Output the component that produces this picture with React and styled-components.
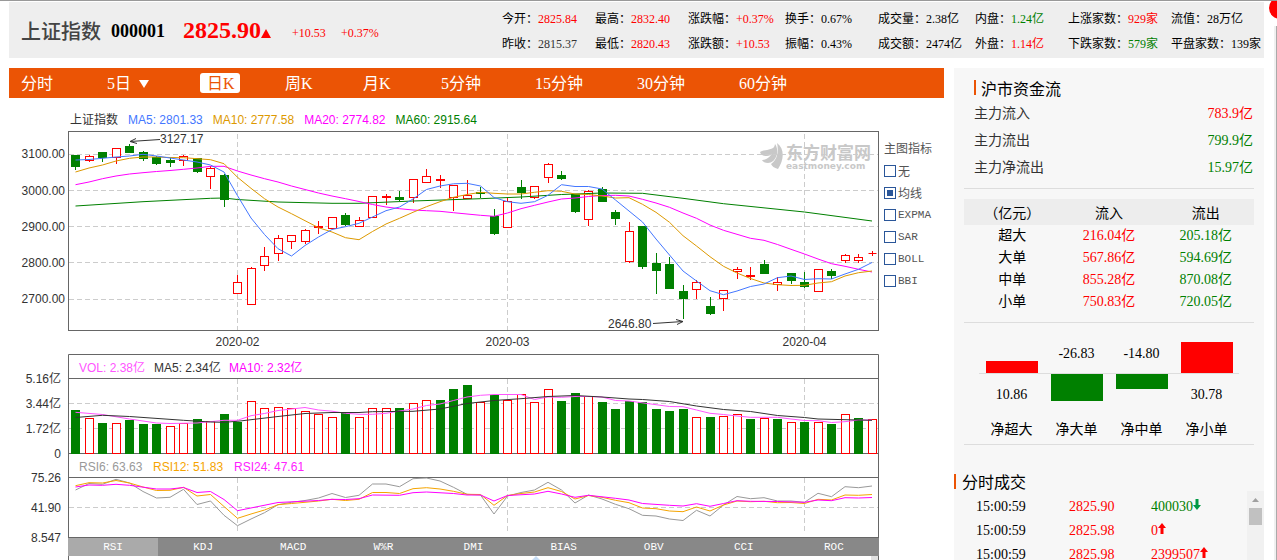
import React, { useState } from "react";
import styled, { createGlobalStyle } from "styled-components";

const RED = "#ff0000";
const GREEN = "#008000";

// [body top, body bottom, high, low, rising]
const candles = [
  [156, 167, 156, 170, 0], [157, 161, 155, 162, 1], [153, 158, 152, 162, 0],
  [149, 158, 148, 164, 1], [147, 153, 144, 153, 0], [153, 159, 151, 161, 0],
  [158, 164, 156, 165, 0], [161, 163, 158, 167, 0], [157, 161, 155, 166, 1],
  [159, 172, 159, 173, 0], [169, 177, 166, 189, 1], [176, 200, 174, 207, 0],
  [283, 294, 275, 294, 1], [269, 305, 267, 305, 1], [257, 266, 247, 271, 1],
  [239, 254, 235, 261, 1], [236, 242, 236, 249, 1], [231, 242, 229, 244, 1],
  [227, 228, 221, 234, 1], [218, 229, 218, 229, 1], [216, 225, 213, 226, 0],
  [221, 227, 217, 227, 1], [197, 218, 197, 218, 1], [197, 198, 194, 205, 1],
  [198, 200, 191, 201, 0], [180, 198, 180, 203, 1], [177, 183, 169, 183, 1],
  [180, 181, 175, 188, 1], [186, 198, 186, 211, 1], [196, 199, 180, 199, 1],
  [193, 194, 187, 198, 0], [217, 234, 209, 235, 0], [202, 228, 197, 228, 1],
  [188, 193, 180, 199, 0], [187, 198, 187, 199, 1], [165, 178, 163, 183, 1],
  [176, 179, 171, 180, 0], [195, 212, 195, 213, 0], [192, 220, 190, 226, 1],
  [190, 202, 187, 202, 0], [213, 219, 210, 225, 0], [232, 262, 222, 263, 1],
  [227, 267, 227, 269, 0], [264, 271, 253, 294, 0], [265, 289, 257, 289, 0],
  [292, 299, 285, 319, 0], [283, 290, 280, 299, 1], [307, 314, 297, 315, 0],
  [291, 299, 291, 311, 1], [270, 272, 267, 279, 1], [276, 277, 267, 280, 1],
  [265, 274, 260, 274, 0], [283, 285, 277, 291, 1], [274, 281, 273, 284, 0],
  [283, 287, 272, 288, 0], [270, 292, 270, 292, 1], [272, 276, 269, 279, 0],
  [256, 261, 254, 263, 1], [258, 261, 254, 263, 1], [253, 253, 251, 256, 1],
];

const ma5 = [
  160, 159.5, 158.3, 157, 156, 154.3, 156, 158, 160, 162, 165, 172, 195.7, 218,
  234.5, 248.7, 256, 245.5, 237, 229.5, 226.7, 223.3, 217, 210.7, 207, 199,
  189.5, 186, 183.8, 183.3, 186, 197.5, 201.7, 203.3, 201.7, 195.3, 184.7,
  186.5, 186.5, 189, 200, 211, 222, 239, 255, 271, 281, 290.7, 294.7, 291,
  286.5, 284, 277.7, 276, 279.5, 278.7, 279, 274, 269.3, 262.5,
];
const ma10 = [
  172, 168, 165, 161, 158.3, 157, 157, 157.5, 157.7, 158.7, 159.7, 163.7,
  177.3, 188.3, 198.7, 207, 213.7, 220.7, 227.7, 232, 237.7, 239.7, 231.5, 224,
  218.3, 212.3, 206.7, 201.7, 197.3, 194.5, 192.3, 193.3, 194, 194, 192.3,
  190.7, 191.3, 194, 194.5, 196, 198, 197.7, 204.3, 212.3, 222.3, 235.7, 246,
  256.7, 266.3, 273, 278.5, 283, 284.7, 285.5, 285.3, 283, 281.7, 276, 272.7,
  271,
];
const ma20 = [
  184.7, 182, 178.7, 176, 174, 172.7, 171.5, 170.5, 169.3, 168, 166.3, 166.3,
  171, 175, 178.7, 182, 186, 189.5, 193, 196, 198.7, 201.5, 204.5, 207, 208.7,
  210, 210.7, 211.3, 212.7, 214, 215.3, 216.3, 213, 208.7, 205.3, 202, 199,
  198, 196.5, 195.5, 195.3, 196, 199.3, 203, 207.3, 213, 218.3, 225, 230.3,
  234.3, 238.3, 240.3, 244.5, 249.3, 254, 259, 263.7, 266.3, 269.3, 272,
];
// sparse series are [index, y] pairs
const ma60 = [
  [0, 206], [5, 201.7], [10, 198.3], [11, 198], [12, 199.5], [15, 202],
  [19, 203.3], [21, 203.3], [25, 201], [30, 198.7], [33, 197], [36, 194.5],
  [39, 193], [42, 193.3], [45, 198.3], [48, 203.7], [54, 212], [59, 221],
];

// [bar top, rising]
const volumes = [
  [410, 0], [418, 1], [423, 0], [423, 1], [420, 0], [424, 0], [424, 0],
  [426, 1], [423, 1], [419, 0], [421, 1], [414, 0], [422, 0], [401, 1],
  [408, 1], [407, 1], [408, 1], [411, 1], [414, 1], [417, 1], [413, 0],
  [417, 1], [408, 1], [408, 1], [408, 0], [403, 1], [400, 1], [400, 0],
  [389, 0], [385, 0], [402, 1], [395, 0], [400, 1], [394, 1], [402, 1],
  [389, 1], [401, 0], [393, 0], [396, 1], [402, 0], [409, 0], [401, 0],
  [402, 0], [409, 0], [411, 0], [409, 0], [417, 1], [417, 0], [416, 1],
  [414, 1], [419, 0], [418, 1], [419, 0], [422, 1], [422, 0], [422, 1],
  [424, 0], [414, 1], [418, 0], [419, 1],
];
const volMa5 = [
  [0, 412.3], [2, 414.5], [4, 419], [6, 423], [7, 423.5], [9, 423],
  [11, 420.3], [12, 420.3], [13, 415.7], [14, 413.5], [15, 410.5],
  [17, 407.5], [18, 410], [19, 411.2], [20, 413.3], [21, 414.3], [22, 414.3],
  [23, 413.3], [24, 411], [25, 409], [26, 405.5], [27, 404], [28, 400.5],
  [29, 397], [30, 395.3], [31, 394.5], [33, 394.5], [34, 399.5], [35, 397],
  [36, 397.3], [37, 396.5], [38, 396.5], [39, 397], [40, 400.5], [41, 401],
  [43, 404.7], [44, 406.5], [45, 406.7], [46, 410], [47, 413.3], [48, 414.5],
  [49, 416], [50, 417.3], [52, 417.3], [53, 419], [54, 420.5], [55, 420.7],
  [56, 422.5], [57, 421.7], [58, 420], [59, 420],
];
const volMa10 = [
  [0, 417.5], [2, 415.3], [4, 416.5], [8, 420.3], [10, 422], [11, 422.3],
  [12, 421.3], [15, 416.5], [17, 413.5], [19, 412.5], [21, 412.5],
  [22, 411.7], [25, 411.3], [27, 409], [29, 403.5], [31, 400.5], [33, 398.7],
  [35, 396.5], [37, 395.5], [39, 397], [41, 399], [42, 399.5], [44, 401.5],
  [46, 406], [48, 409.5], [50, 411.5], [52, 415.5], [54, 417.5], [55, 419],
  [57, 419.7], [59, 420.3],
];

const rsi6 = [
  490, 483.5, 484.3, 479.3, 483, 491.5, 498, 497.3, 489.3, 504.5, 501, 515.3,
  525.7, 519, 512.7, 504.7, 502.3, 500.5, 498, 493.5, 497.5, 495.3, 484, 484,
  486.7, 478.7, 478, 481, 487.3, 494.3, 495, 514, 496, 492.5, 490, 482.3, 490,
  503, 495, 499, 504.3, 508.7, 515.3, 516, 519, 520.5, 510.3, 516, 505, 496.5,
  498.7, 497.7, 501, 501, 502.3, 493.3, 496.7, 486.7, 487.7, 486,
];
const rsi12 = [
  485.7, 482.7, 483, 480.5, 483, 487, 490.5, 490.3, 487.3, 496, 494.5, 506.5,
  518.3, 514, 510, 504.7, 503.5, 502.3, 501, 499.3, 500.5, 499.3, 492.5, 492.5,
  493.5, 488.7, 487.7, 489, 491.3, 494.3, 494.5, 505.3, 495.5, 493.5, 492,
  487.7, 491.5, 499, 495.5, 497.3, 500.3, 502.7, 508, 508.7, 511, 511.7, 507,
  511, 505, 501, 501.7, 501.3, 502.7, 502.5, 503.5, 499.3, 500, 495, 495.3,
  494.5,
];
const rsi24 = [
  [0, 487], [1, 485], [2, 485.3], [3, 484.3], [4, 485.3], [6, 489], [7, 489],
  [8, 487.5], [9, 492.5], [10, 491.5], [11, 499.5], [12, 510.7], [15, 502.5],
  [18, 500.5], [19, 499.3], [20, 499.5], [21, 498.7], [22, 495], [24, 495.3],
  [25, 492.7], [26, 492], [28, 493.5], [29, 495], [30, 495], [31, 501],
  [32, 495.5], [34, 494], [35, 491.3], [36, 494], [37, 497.3], [38, 495.3],
  [40, 498.3], [41, 500], [42, 503.5], [44, 505.3], [45, 506], [46, 503.7],
  [47, 506.3], [48, 503.5], [49, 500.7], [50, 501.3], [52, 501.5],
  [54, 502.3], [55, 500], [56, 500.7], [57, 497.7], [58, 498], [59, 497.5],
];

const stats = [
  ["今开", "2825.84", RED], ["最高", "2832.40", RED], ["涨跌幅", "+0.37%", RED],
  ["换手", "0.67%"], ["成交量", "2.38亿"], ["内盘", "1.24亿", GREEN],
  ["上涨家数", "929家", RED], ["流值", "28万亿"],
  ["昨收", "2815.37", "#333"], ["最低", "2820.43", RED], ["涨跌额", "+10.53", RED],
  ["振幅", "0.43%"], ["成交额", "2474亿"], ["外盘", "1.14亿", RED],
  ["下跌家数", "579家", GREEN], ["平盘家数", "139家"],
];

const periods = [
  ["分时", 48], ["5日", 62], ["日K", 40], ["周K", 40], ["月K", 40],
  ["5分钟", 56], ["15分钟", 64], ["30分钟", 64], ["60分钟", 64],
];

const overlays = ["无", "均线", "EXPMA", "SAR", "BOLL", "BBI"];
const indicators = ["RSI", "KDJ", "MACD", "W%R", "DMI", "BIAS", "OBV", "CCI", "ROC"];

const flows = [
  ["主力流入", "783.9亿", RED],
  ["主力流出", "799.9亿", GREEN],
  ["主力净流出", "15.97亿", GREEN],
];
const orders = [
  ["超大", "216.04亿", "205.18亿"],
  ["大单", "567.86亿", "594.69亿"],
  ["中单", "855.28亿", "870.08亿"],
  ["小单", "750.83亿", "720.05亿"],
];
const nets = [
  ["净超大", 10.86, 12],
  ["净大单", -26.83, 27],
  ["净中单", -14.8, 15],
  ["净小单", 30.78, 31],
];
const trades = [
  ["15:00:59", "2825.90", "400030", false],
  ["15:00:59", "2825.98", "0", true],
  ["15:00:59", "2825.98", "2399507", true],
];

const barX = (i) => 66.5 + i * 13.5;

const toPoints = (series) =>
  series
    .map((p, i) => (Array.isArray(p) ? `${barX(p[0])},${p[1]}` : `${barX(i)},${p}`))
    .join(" ");

const monthLines = [12, 32, 54];

const Candle = ({ index, data }) => {
  const [top, bottom, high, low, up] = data;
  const x = Math.floor(barX(index)) + 0.5;
  const color = up ? RED : GREEN;
  if (top === bottom) {
    return (
      <path d={`M${x - 4} ${top + 0.5}H${x + 4}M${x} ${high}V${low}`} stroke={color} />
    );
  }
  const thin = bottom - top <= 1;
  return (
    <g stroke={color} fill={up ? "#fff" : GREEN}>
      <line x1={x} x2={x} y1={high} y2={low} />
      <rect
        x={x - 4}
        y={top - 0.5}
        width="8"
        height={bottom - top}
        fill={thin ? color : undefined}
      />
    </g>
  );
};

const PriceChart = () => (
  <Chart viewBox="0 128 870 224" role="img" aria-label="上证指数 日K">
    <g fill="#c8c8c8">
      <path d="M751 152C756 149 762 151 766 146C767 150 763 156 758 156C754 156 752 155 751 152Z" />
      <path d="M753 160C759 160 764 155 766 144C771 151 767 163 759 163C756 163 754 162 753 160Z" />
      <path d="M768 143C776 149 775 160 769 169C765 168 763 166 762 164C768 160 770 152 768 143Z" />
      <text x="777" y="159" fontSize="17" fontWeight="700">东方财富网</text>
      <BrandText x="777" y="169">eastmoney.com</BrandText>
    </g>
    <Grid>
      {[154.5, 190.5, 226.5, 262.5, 299.5].map((y) => (
        <line key={y} x1="60" x2="869" y1={y} y2={y} />
      ))}
      {monthLines.map((i) => (
        <line key={i} x1={barX(i)} x2={barX(i)} y1="134" y2="330" />
      ))}
    </Grid>
    <Frame>
      <rect x="59.5" y="131.5" width="810" height="199" />
    </Frame>
    {candles.map((c, i) => (
      <Candle key={i} index={i} data={c} />
    ))}
    <Series>
      <polyline points={toPoints(ma60)} stroke="#008000" />
      <polyline points={toPoints(ma20)} stroke="#ff00ff" />
      <polyline points={toPoints(ma10)} stroke="#dd9900" />
      <polyline points={toPoints(ma5)} stroke="#4477ff" />
    </Series>
    <g stroke="#333" fill="none">
      <path d="M151 139.500L121 141.500M127 138.500L121 141.500L128 143.500" />
      <path d="M644 323.500L674 321.500M667 319.500L674 321.500L668 324.500" />
    </g>
    <text x="151" y="143">3127.17</text>
    <text x="599" y="328">2646.80</text>
    <g textAnchor="end">
      <text x="56" y="158">3100.00</text>
      <text x="56" y="195">3000.00</text>
      <text x="56" y="231">2900.00</text>
      <text x="56" y="267">2800.00</text>
      <text x="56" y="303">2700.00</text>
    </g>
    <g textAnchor="middle">
      {["2020-02", "2020-03", "2020-04"].map((m, i) => (
        <text key={m} x={barX(monthLines[i])} y="346">{m}</text>
      ))}
    </g>
  </Chart>
);

const VolumeChart = () => (
  <Chart viewBox="0 352 870 186" role="img" aria-label="成交量 RSI">
    <Grid>
      {[403.5, 428.5, 507.5].map((y) => (
        <line key={y} x1="60" x2="869" y1={y} y2={y} />
      ))}
      {monthLines.map((i) => (
        <g key={i}>
          <line x1={barX(i)} x2={barX(i)} y1="379" y2="453" />
          <line x1={barX(i)} x2={barX(i)} y1="478" y2="534" />
        </g>
      ))}
    </Grid>
    <Frame>
      <path d="M59.500 538V354.500H869.500V538M59 378.500H870M59 453.500H870M59 477.500H870M59 537.500H870" />
    </Frame>
    {volumes.map(([top, up], i) => (
      <rect
        key={i}
        x={Math.floor(barX(i)) - 3.5}
        y={top + 0.5}
        width="8"
        height={453 - top}
        fill={up ? "#fff" : GREEN}
        stroke={up ? RED : GREEN}
      />
    ))}
    <Series>
      <polyline points={toPoints(volMa5)} stroke="#ff55ff" />
      <polyline points={toPoints(volMa10)} stroke="#333333" />
      <polyline points={toPoints(rsi6)} stroke="#999999" />
      <polyline points={toPoints(rsi12)} stroke="#f5a400" />
      <polyline points={toPoints(rsi24)} stroke="#ff00ff" />
    </Series>
    <text x="70" y="372" fill="#ff55ff">VOL: 2.38亿</text>
    <text x="145" y="372">MA5: 2.34亿</text>
    <text x="220" y="372" fill="#ff00ff">MA10: 2.32亿</text>
    <text x="70" y="471" fill="#999">RSI6: 63.63</text>
    <text x="144" y="471" fill="#f5a400">RSI12: 51.83</text>
    <text x="225" y="471" fill="#ff22ff">RSI24: 47.61</text>
    <g textAnchor="end">
      <text x="52" y="383">5.16亿</text>
      <text x="52" y="408">3.44亿</text>
      <text x="52" y="433">1.72亿</text>
      <text x="52" y="458">0</text>
      <text x="52" y="482">75.26</text>
      <text x="52" y="512">41.90</text>
      <text x="52" y="542">8.547</text>
    </g>
  </Chart>
);

const TradeArrow = ({ up }) => (
  <svg width="8" height="12" viewBox="0 0 8 12" aria-hidden="true">
    <path
      d={up ? "M4 0L8 5H5.500V11H2.500V5H0Z" : "M4 11L8 6H5.500V0H2.500V6H0Z"}
      fill={up ? RED : "#009944"}
    />
  </svg>
);

const App = () => {
  const [period, setPeriod] = useState("日K");
  const [overlay, setOverlay] = useState("均线");
  const [indicator, setIndicator] = useState("RSI");

  return (
    <Page>
      <GlobalStyle />
      <Content>
        <Header>
          <StockName>上证指数</StockName>
          <StockCode>000001</StockCode>
          <Price>
            2825.90
            <svg width="10" height="9" viewBox="0 0 10 9" aria-hidden="true">
              <path d="M5 0L10 9H0Z" fill={RED} />
            </svg>
          </Price>
          <Change>+10.53</Change>
          <Change>+0.37%</Change>
          <Stats>
            {stats.map(([label, value, color]) => (
              <Stat key={label}>
                {label}：<Value $color={color}>{value}</Value>
              </Stat>
            ))}
          </Stats>
        </Header>

        <Columns>
          <Main>
            <Periods>
              {periods.map(([name, width]) => (
                <Period
                  key={name}
                  $width={width}
                  $active={period === name}
                  onClick={() => setPeriod(name)}
                >
                  {name}
                  {name === "5日" && (
                    <svg width="10" height="8" viewBox="0 0 10 8" aria-hidden="true">
                      <path d="M0 0H10L5 8Z" fill="currentColor" />
                    </svg>
                  )}
                </Period>
              ))}
            </Periods>
            <ChartArea>
              <Charts>
                <Legend>
                  <Value $color="#333">上证指数</Value>
                  <Value $color="#4477ff">MA5: 2801.33</Value>
                  <Value $color="#dd9900">MA10: 2777.58</Value>
                  <Value $color="#ff00ff">MA20: 2774.82</Value>
                  <Value $color="#008000">MA60: 2915.64</Value>
                </Legend>
                <PriceChart />
                <VolumeChart />
                <Tabs>
                  {indicators.map((name) => (
                    <Tab
                      key={name}
                      $active={indicator === name}
                      onClick={() => setIndicator(name)}
                    >
                      {name}
                    </Tab>
                  ))}
                </Tabs>
                <Navigator>
                  <svg width="8" height="4" viewBox="0 0 8 4" aria-hidden="true">
                    <path d="M0 4L4 0L8 4Z" fill="#c5dcf5" />
                  </svg>
                  <Handle />
                </Navigator>
              </Charts>
              <Overlays>
                <OverlayTitle>主图指标</OverlayTitle>
                {overlays.map((name) => (
                  <Option key={name}>
                    <Check
                      type="checkbox"
                      checked={overlay === name}
                      onChange={() => setOverlay(name)}
                    />
                    {name}
                  </Option>
                ))}
              </Overlays>
            </ChartArea>
          </Main>

          <Side>
            <Section>
              <Title>沪市资金流</Title>
              {flows.map(([label, value, color]) => (
                <Flow key={label}>
                  {label}
                  <Value $color={color}>{value}</Value>
                </Flow>
              ))}
            </Section>
            <Rule />
            <Table>
              <thead>
                <tr>
                  <th>（亿元）</th>
                  <th>流入</th>
                  <th>流出</th>
                </tr>
              </thead>
              <tbody>
                {orders.map(([name, inflow, outflow]) => (
                  <tr key={name}>
                    <td>{name}</td>
                    <td><Value $color={RED}>{inflow}</Value></td>
                    <td><Value $color={GREEN}>{outflow}</Value></td>
                  </tr>
                ))}
              </tbody>
            </Table>
            <Rule />
            <NetChart>
              {nets.map(([name, value, size]) => (
                <Net key={name}>
                  <Upper>
                    {value < 0 ? value.toFixed(2) : <Bar $color={RED} style={{ height: size }} />}
                  </Upper>
                  <Lower>
                    {value < 0 ? <Bar $color={GREEN} style={{ height: size }} /> : value.toFixed(2)}
                  </Lower>
                  <NetName>{name}</NetName>
                </Net>
              ))}
            </NetChart>
            <Rule />
            <TradeTitle>分时成交</TradeTitle>
            <TradeArea>
              <Trades>
                {trades.map(([time, price, volume, up], i) => (
                  <Trade key={i}>
                    <span>{time}</span>
                    <Value $color={RED}>{price}</Value>
                    <Value $color={up ? RED : GREEN}>
                      {volume}
                      <TradeArrow up={up} />
                    </Value>
                  </Trade>
                ))}
              </Trades>
              <Scroll>
                <svg width="7" height="4" viewBox="0 0 7 4" aria-hidden="true">
                  <path d="M3.500 0L7 4H0Z" fill="#a0a0a0" />
                </svg>
                <Thumb />
              </Scroll>
            </TradeArea>
          </Side>
        </Columns>
      </Content>
      <Edge />
      <Badge />
    </Page>
  );
};

export default App;

const GlobalStyle = createGlobalStyle`
  * {
    box-sizing: border-box;
  }

  body {
    margin: 0;
    background: #fff;
    color: #000;
    font-family: "Liberation Serif", "Noto Sans CJK SC", serif;
    font-size: 12px;
  }

  button {
    font: inherit;
    border: 0;
    padding: 0;
    cursor: pointer;
  }
`;

const Page = styled.div`
  position: relative;
  display: flex;
  height: 100vh;
  overflow: hidden;
  border-top: 1px solid #999;
`;

const Content = styled.div`
  flex: 1;
  min-width: 0;
  padding: 1px 10px 0 9px;
`;

const Edge = styled.div`
  width: 3px;
  margin-top: 25px;
  background: #f0f0f0;
  border-right: 1px solid #aaa;
`;

const Badge = styled.div`
  position: absolute;
  top: -4px;
  right: -14px;
  width: 22px;
  height: 22px;
  border-radius: 50%;
  background: #f00;
`;

const Header = styled.header`
  display: flex;
  align-items: center;
  height: 56px;
  padding-left: 12px;
  background: #eee;
  white-space: nowrap;
`;

const StockName = styled.h1`
  width: 90px;
  margin: 0;
  font-size: 20px;
  font-weight: 500;
  color: #444;
`;

const StockCode = styled.strong`
  width: 72px;
  padding-top: 2px;
  font-size: 18px;
`;

const Price = styled.strong`
  width: 109px;
  font-size: 24px;
  color: #f00;
`;

const Change = styled.span`
  width: 49px;
  padding-top: 6px;
  color: #f00;
`;

const Stats = styled.div`
  display: grid;
  grid-template-columns: 93px 93px 97px 93px 97px 93px 103px 93px;
  grid-auto-rows: 25px;
  align-items: center;
  margin-left: auto;
  padding-top: 2px;
`;

const Stat = styled.span`
  line-height: 18px;
`;

const Value = styled.span`
  color: ${(p) => p.$color || "inherit"};
`;

const Columns = styled.div`
  display: flex;
  gap: 10px;
  padding-top: 10px;
`;

const Main = styled.main`
  flex: 1;
  min-width: 0;
`;

const Periods = styled.nav`
  display: flex;
  align-items: center;
  gap: 38px;
  height: 30px;
  padding-left: 5px;
  background: #eb5405;
`;

const Period = styled.button`
  display: flex;
  align-items: center;
  gap: 8px;
  width: ${(p) => p.$width}px;
  height: 20px;
  padding: 2px 7px 0;
  border-radius: 3px;
  font-size: 16px;
  line-height: 18px;
  white-space: nowrap;
  color: ${(p) => (p.$active ? "#eb5405" : "#fff")};
  background: ${(p) => (p.$active ? "#fff" : "transparent")};
`;

const ChartArea = styled.div`
  display: flex;
`;

const Charts = styled.div`
  flex: 1;
  min-width: 0;
`;

const Legend = styled.div`
  display: flex;
  gap: 10px;
  height: 30px;
  padding: 13px 0 0 61px;
  line-height: 18px;
  font-family: "Liberation Sans", "Noto Sans CJK SC", sans-serif;
`;

const Chart = styled.svg`
  display: block;
  width: 100%;
  height: auto;
  overflow: visible;
  font-family: "Liberation Sans", "Noto Sans CJK SC", sans-serif;
  font-size: 12px;
  fill: #333;
`;

const Grid = styled.g`
  stroke: #ccc;
  stroke-dasharray: 5 3;
`;

const Frame = styled.g`
  fill: none;
  stroke: #666;
`;

const Series = styled.g`
  fill: none;
  stroke-width: 1;
`;

const BrandText = styled.text`
  font-family: "DejaVu Sans", sans-serif;
  font-size: 9px;
  font-weight: 700;
`;

const Tabs = styled.div`
  display: flex;
  margin-left: 59px;
  background: #888;
`;

const Tab = styled.button`
  flex: 1;
  height: 18px;
  font-family: "Liberation Mono", monospace;
  font-size: 11px;
  line-height: 18px;
  color: #fff;
  background: ${(p) => (p.$active ? "#aaa" : "#888")};
`;

const Navigator = styled.div`
  display: flex;
  justify-content: space-between;
  height: 20px;
  margin-left: 59px;
  padding-left: 463px;
  border: solid #666;
  border-width: 0 1px;
`;

const Handle = styled.div`
  width: 7px;
  background: #e0e0e0;
`;

const Overlays = styled.div`
  width: 65px;
  padding: 40px 0 0 5px;
  color: #555;
`;

const OverlayTitle = styled.div`
  line-height: 22px;
`;

const Option = styled.label`
  display: flex;
  align-items: center;
  gap: 2px;
  height: 22px;
  font-family: "Liberation Mono", "Noto Sans CJK SC", monospace;
  font-size: 11px;

  &:nth-child(-n + 3) {
    font-size: 12px;
  }
`;

const Check = styled.input`
  appearance: none;
  width: 12px;
  height: 12px;
  margin: 0;
  border: 1px solid #2a5699;
  background: #fff;

  &:checked {
    background: #2a5699;
    box-shadow: inset 0 0 0 2px #fff;
  }
`;

const Side = styled.aside`
  width: 310px;
  background: #f7f7f7;
  font-size: 14px;
`;

const Section = styled.section`
  padding: 7px 11px 7px 20px;
`;

const Title = styled.h2`
  display: flex;
  align-items: center;
  gap: 5px;
  margin: 0;
  height: 25px;
  font-size: 16px;
  font-weight: 400;

  &::before {
    content: "";
    width: 2px;
    height: 15px;
    background: #eb5405;
  }
`;

const Flow = styled.div`
  display: flex;
  justify-content: space-between;
  line-height: 27px;
  color: #333;
`;

const Rule = styled.hr`
  height: 1px;
  margin: 0 10px;
  border: 0;
  background: #ddd;
`;

const Table = styled.table`
  width: 290px;
  margin: 10px 10px 9px;
  table-layout: fixed;
  border-collapse: collapse;
  text-align: center;

  th {
    height: 26px;
    padding: 0;
    font-weight: 400;
    background: #ededed;
  }

  td {
    height: 22px;
    padding: 0;
    line-height: 22px;
  }
`;

const NetChart = styled.div`
  display: flex;
  height: 121px;
  padding: 0 25px;
  text-align: center;
`;

const Net = styled.div`
  flex: 1;
`;

const Upper = styled.div`
  display: flex;
  flex-direction: column;
  justify-content: flex-end;
  align-items: center;
  height: 51px;
  line-height: 38px;
  border-bottom: 1px solid #ddd;
`;

const Lower = styled.div`
  display: flex;
  flex-direction: column;
  align-items: center;
  height: 42px;
  line-height: 42px;
`;

const Bar = styled.div`
  width: 52px;
  background: ${(p) => p.$color};
`;

const NetName = styled.div`
  line-height: 28px;
`;

const TradeTitle = styled(Title)`
  margin-top: 26px;
  height: 20px;
  gap: 6px;
`;

const TradeArea = styled.div`
  display: flex;
  height: 200px;
`;

const Trades = styled.div`
  flex: 1;
  padding: 4px 0 0 22px;
`;

const Trade = styled.div`
  display: grid;
  grid-template-columns: 93px 82px 1fr;
  line-height: 24px;
`;

const Scroll = styled.div`
  display: flex;
  flex-direction: column;
  align-items: center;
  gap: 6px;
  width: 17px;
  padding-top: 7px;
  background: #f1f1f1;
`;

const Thumb = styled.div`
  width: 13px;
  height: 17px;
  background: #c1c1c1;
`;
